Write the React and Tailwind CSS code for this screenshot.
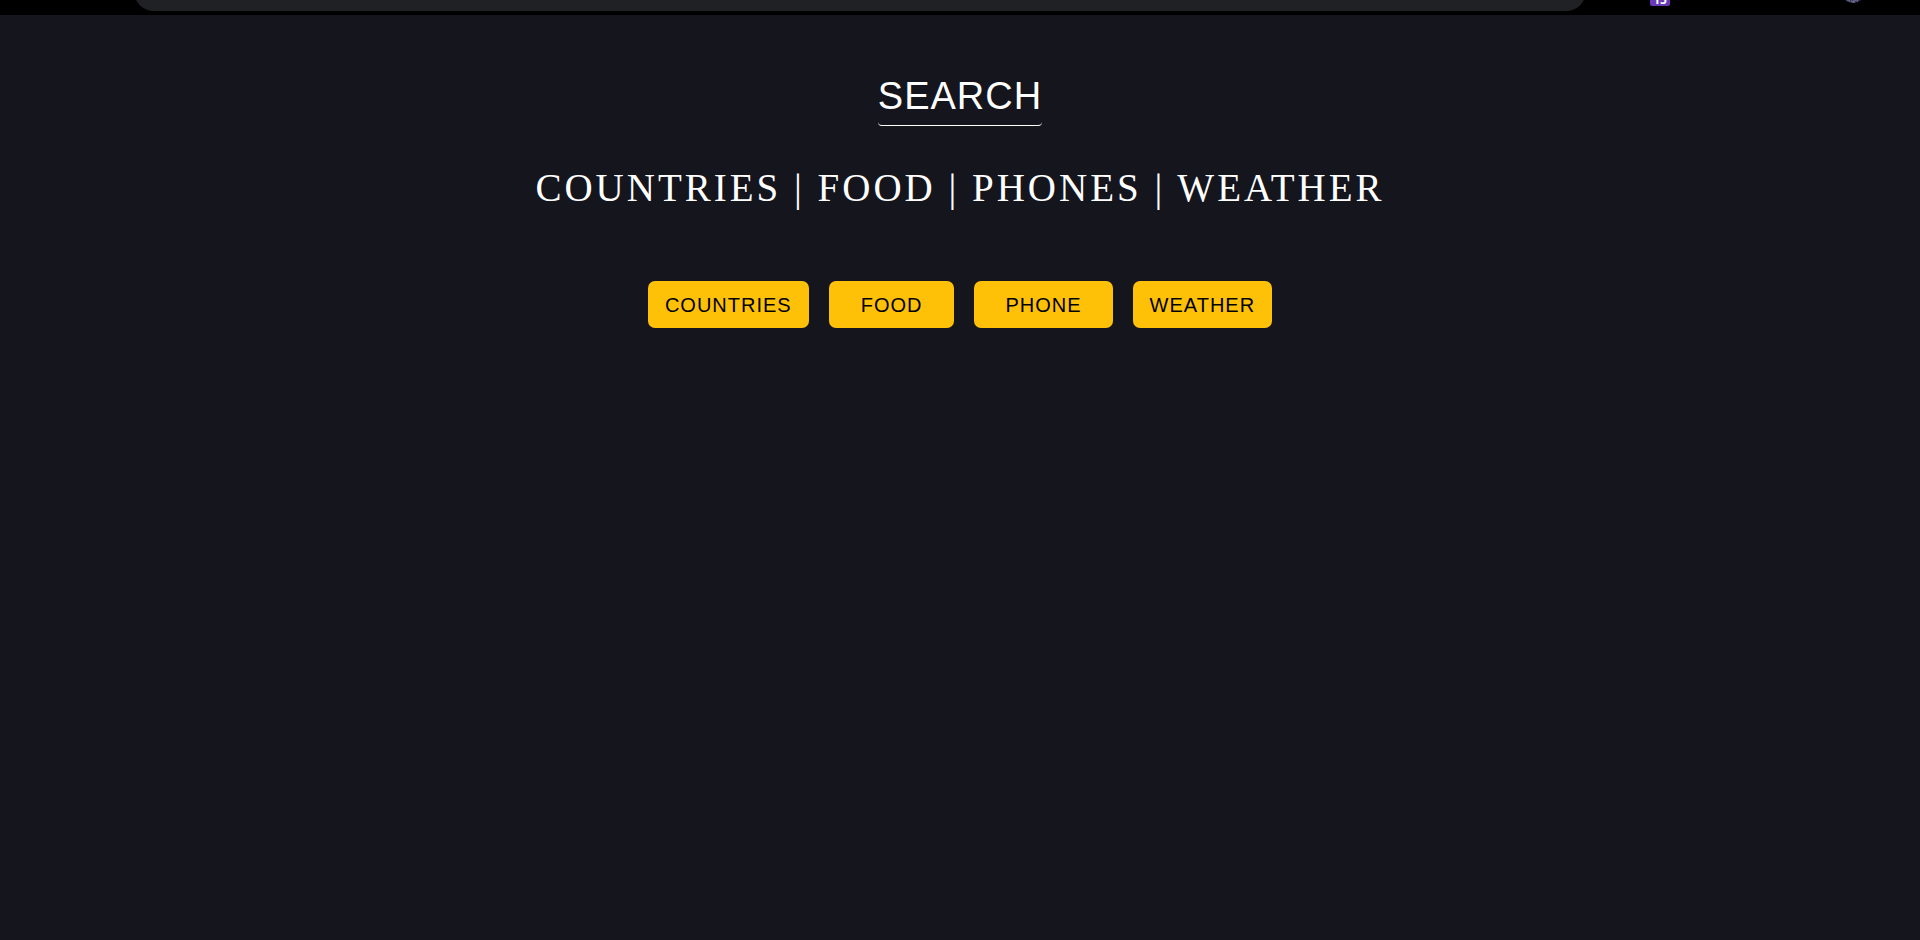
const topics = ["COUNTRIES", "FOOD", "PHONES", "WEATHER"];

const buttons = [
  { label: "COUNTRIES", padding: "px-[17px]" },
  { label: "FOOD", padding: "px-8" },
  { label: "PHONE", padding: "px-[31px]" },
  { label: "WEATHER", padding: "px-[17px]" },
];

function BrowserBar() {
  return (
    <div className="flex h-[15px] items-start overflow-hidden bg-black">
      <div className="ml-[134px] mr-[64px] flex h-[11px] flex-1 items-end">
        <div className="h-10 flex-1 rounded-full bg-[#202124]" />
      </div>
      <div className="flex h-[6px] w-5 items-end justify-center">
        <span className="flex h-[13px] w-5 items-center justify-center rounded-[2px] bg-[#673ab7] font-['Open_Sans',sans-serif] text-[12px] leading-[13px] font-bold text-white">
          15
        </span>
      </div>
      <div className="mr-[55px] ml-[171px] flex h-[3px] w-6 items-end">
        <svg viewBox="0 0 24 24" className="h-6 w-6 shrink-0" aria-hidden="true">
          <circle cx="12" cy="12" r="12" fill="#3b3a5c" />
          <path d="M6 21h2M10 22h1M13 21h2M16 22h1M11 23h3" stroke="#8a7fa0" strokeWidth="1" />
          <path d="M8 22h1M12 22h1M15 21h1" stroke="#6d83b5" strokeWidth="1" />
        </svg>
      </div>
    </div>
  );
}

export default function App() {
  return (
    <div className="flex min-h-screen flex-col bg-[#15151e]">
      <BrowserBar />
      <main className="flex flex-col items-center pt-[59px]">
        <h1 className="rounded-[4px] border-b border-white pb-[6px] font-['Liberation_Sans',sans-serif] text-[38px] leading-[45px] tracking-[1px] text-white">
          SEARCH
        </h1>
        <h2 className="mt-10 font-['Liberation_Serif',serif] text-[39px] leading-[44px] tracking-[3px] text-white">
          {topics.join(" | ")}
        </h2>
        <nav className="mt-[71px] flex gap-5">
          {buttons.map(({ label, padding }) => (
            <button
              key={label}
              type="button"
              className={`${padding} h-[47px] rounded-[7px] bg-[#ffc107] font-['Liberation_Sans',sans-serif] text-[20px] leading-6 tracking-[1px] text-black`}
            >
              {label}
            </button>
          ))}
        </nav>
      </main>
    </div>
  );
}
